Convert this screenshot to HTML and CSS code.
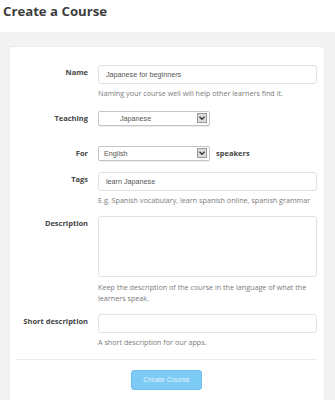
FILE: index.html
```html
<!DOCTYPE html>
<html lang="en">
<head>
    <meta charset="UTF-8">
    <meta name="viewport" content="width=device-width, initial-scale=1.0">
    <title>Create a Course</title>
    <link rel="stylesheet" href="styles.css">
</head>
<body>

    <h1 class="page-title">Create a Course</h1>

    <div class="page-body">
        <div class="card">
            <form class="course-form">

                <div class="row row-name">
                    <label class="row-label">Name</label>
                    <div class="row-field">
                        <input type="text" class="text-input" value="Japanese for beginners">
                        <p class="help">Naming your course well will help other learners find it.</p>
                    </div>
                </div>

                <div class="row row-teaching">
                    <label class="row-label">Teaching</label>
                    <div class="row-field">
                        <div class="select select-indent">
                            <span class="select-text">Japanese</span>
                            <span class="select-arrow">
                                <svg width="8" height="8" viewBox="0 0 8 8"><path d="M1.5 2.8 L4 5.3 L6.5 2.8" fill="none" stroke="#333" stroke-width="1.3"/></svg>
                            </span>
                        </div>
                    </div>
                </div>

                <div class="row row-for">
                    <label class="row-label">For</label>
                    <div class="row-field inline-field">
                        <div class="select">
                            <span class="select-text">English</span>
                            <span class="select-arrow">
                                <svg width="8" height="8" viewBox="0 0 8 8"><path d="M1.5 2.8 L4 5.3 L6.5 2.8" fill="none" stroke="#333" stroke-width="1.3"/></svg>
                            </span>
                        </div>
                        <span class="after-select">speakers</span>
                    </div>
                </div>

                <div class="row row-tags">
                    <label class="row-label">Tags</label>
                    <div class="row-field">
                        <input type="text" class="text-input" value="learn Japanese">
                        <p class="help">E.g. Spanish vocabulary, learn spanish online, spanish grammar</p>
                    </div>
                </div>

                <div class="row row-desc">
                    <label class="row-label">Description</label>
                    <div class="row-field">
                        <textarea class="text-area"></textarea>
                        <p class="help">Keep the description of the course in the language of what the learners speak.</p>
                    </div>
                </div>

                <div class="row row-short">
                    <label class="row-label">Short description</label>
                    <div class="row-field">
                        <input type="text" class="text-input">
                        <p class="help">A short description for our apps.</p>
                    </div>
                </div>

                <div class="actions">
                    <button type="button" class="btn-create">Create Course</button>
                </div>

            </form>
        </div>
    </div>

</body>
</html>
```

FILE: styles.css
```css
* {
    box-sizing: border-box;
}

body {
    margin: 0;
    background-color: #ffffff;
    font-family: "Open Sans", "Liberation Sans", sans-serif;
    color: #444;
}

.page-title {
    margin: 0;
    height: 32px;
    padding: 3px 0 0 3px;
    font-size: 13.2px;
    line-height: 16px;
    font-weight: 700;
    color: #3d3d3d;
}

.page-body {
    background-color: #f3f3f3;
    padding: 14px 10px 0 9px;
    height: 368px;
}

.card {
    background-color: #fff;
    border: 1px solid #ececec;
    border-radius: 3px;
    padding: 18px 7px 20px 6px;
}

.row {
    display: flex;
    align-items: flex-start;
}

.row-label {
    width: 72px;
    flex: none;
    margin-right: 10px;
    padding-top: 2px;
    text-align: right;
    font-size: 7.5px;
    line-height: 11px;
    font-weight: 700;
    color: #444;
}

.row-field {
    flex: 1;
}

.row-name { margin-bottom: 11px; }
.row-teaching { margin-bottom: 20px; }
.row-for { margin-bottom: 11px; }
.row-tags { margin-bottom: 10px; }
.row-desc { margin-bottom: 10px; }
.row-short { margin-bottom: 10px; }

.text-input,
.text-area {
    display: block;
    width: 100%;
    height: 19px;
    margin: 0;
    padding: 0 7px;
    border: 1px solid #e2e2e2;
    border-radius: 3px;
    background: #fff;
    font-family: "Liberation Sans", Arial, sans-serif;
    font-size: 7.2px;
    color: #555;
    outline: none;
}

.text-area {
    height: 61px;
    resize: none;
}

.help {
    margin: 4px 0 0 0;
    font-size: 7.2px;
    line-height: 11.5px;
    color: #7b7b7b;
}

.row-desc .help {
    margin-top: 5px;
    line-height: 11px;
}

.inline-field {
    display: flex;
    align-items: center;
}

.select {
    width: 112px;
    height: 15px;
    border: 1px solid #c4c4c4;
    border-radius: 2px;
    background: #fff;
    display: flex;
    align-items: center;
    justify-content: space-between;
    padding: 0 2px 0 5px;
    box-shadow: 0 1px 0 #ececec;
}

.select-indent {
    padding-left: 21px;
}

.select-text {
    font-family: "Liberation Sans", Arial, sans-serif;
    font-size: 7.2px;
    color: #555;
}

.select-arrow {
    width: 10px;
    height: 10px;
    border: 1px solid #9a9a9a;
    background: #dcdcdc;
    display: flex;
    align-items: center;
    justify-content: center;
}

.after-select {
    margin-left: 6px;
    font-size: 7.5px;
    font-weight: 700;
    color: #444;
}

.actions {
    border-top: 1px solid #ececec;
    padding-top: 10px;
    display: flex;
    justify-content: center;
}

.btn-create {
    width: 71px;
    height: 20px;
    border: 1px solid #6fc0ee;
    border-radius: 3px;
    background-color: #7ccbf5;
    color: #e4f4fd;
    font-family: "Liberation Sans", Arial, sans-serif;
    font-size: 7.2px;
    padding: 0;
}
```
